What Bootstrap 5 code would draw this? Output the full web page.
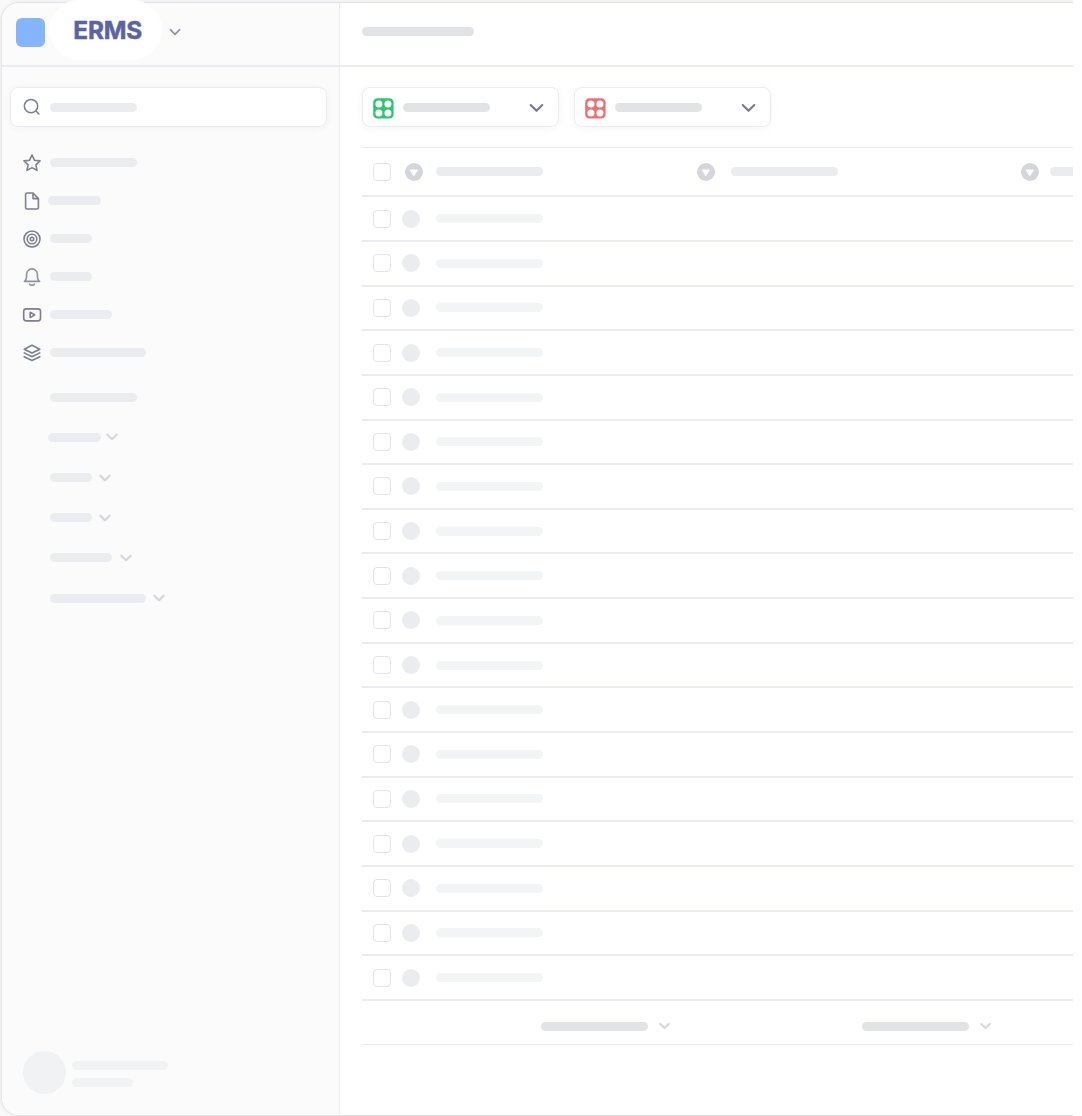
<!DOCTYPE html>
<html lang="en">
<head>
<meta charset="utf-8">
<meta name="viewport" content="width=device-width, initial-scale=1">
<title>ERMS</title>
<link href="https://cdn.jsdelivr.net/npm/bootstrap@5.3.0/dist/css/bootstrap.min.css" rel="stylesheet">
<style>
  body { background: #fff; font-family: Inter, "Liberation Sans", sans-serif; overflow: hidden; }
  svg { display: block; flex: none; fill: none; stroke-linecap: round; stroke-linejoin: round; }
  .stage { width: 1073px; height: 1116px; background: #f9f9fa; padding: 2px 0 0 1px; }
  .frame { width: 1100px; height: 1114px; border: 1px solid #e2e3e7; border-radius: 18px; background: #fff; box-shadow: 0 0 5px rgba(30,34,60,.07); }
  .side { width: 338px; background: #fbfbfb; border-right: 1px solid #ebecef; }
  .topbar { height: 64px; border-bottom: 2px solid #ebecf0; flex: none; }
  .side .topbar { padding-left: 14px; }
  .logo { width: 29px; height: 29px; border-radius: 6px; background: #84b5fe; margin-top: -4px; }
  .brand { left: 49px; top: 0; width: 113px; height: 60px; border-radius: 30px; background: #fff; color: #5b63a5; font-weight: 700; font-size: 24.4px; line-height: 60px; padding-left: 24.3px; -webkit-text-stroke: .5px #5b63a5; letter-spacing: -.2px; }
  .brand-caret { margin: -4px 0 0 124px; }
  .pill { display: block; flex: none; height: 9px; border-radius: 5px; background: #ebecf0; }
  .pill-dark { background: #e2e3e7; }
  .pill-soft { background: #f3f4f6; }
  .w-xl { width: 96px; } .w-lg { width: 87px; } .w-md { width: 62.5px; } .w-sm { width: 53.5px; } .w-xs { width: 42px; } .w-col { width: 107px; }
  .box { background: #fff; border: 1px solid #ebecef; border-radius: 8px; height: 40px; box-shadow: 0 1px 9px rgba(30,34,60,.045); }
  .search { margin: 20px 12px 0 8px; padding-left: 12px; }
  .search .pill { margin: 0 0 0 9px; }
  .side-nav { margin-top: 16.9px; padding-left: 20px; }
  .side-nav > div { height: 37.95px; }
  .side-nav svg { stroke: #7b7f93; stroke-width: 1.6; width: 20px; height: 20px; }
  .side-nav .pill { margin-left: 7.7px; }
  .side-nav .shift { margin-left: 5.7px; }
  .sub-nav { margin-top: 5.6px; padding-left: 47.7px; }
  .sub-nav > div { height: 40.2px; gap: 7.6px; }
  .sub-nav .shift { margin-left: -2px; gap: 5.1px; }
  .pale { stroke: #d5d7de; stroke-width: 2.3; }
  .user { padding: 0 0 21.5px 21px; gap: 6.5px; }
  .avatar { width: 42.5px; height: 42.5px; background: #f1f2f4; }
  .user .pill { background: #f1f2f4; }
  .main { min-width: 0; }
  .main .topbar { padding: 0 0 6px 22px; }
  .filters { padding: 20px 0 0 22px; gap: 15.5px; }
  .filter { width: 196.7px; padding: 1px 14px 0 10.3px; }
  .filter > svg:first-child { margin-top: 1px; }
  .filter .pill { margin: 0 auto 1px 8.6px; }
  .grid-list { margin: 20px 0 0 22px; border-top: 1px solid #ebecef; }
  .line { height: 44.65px; border-bottom: 2px solid #ebecf0; padding-left: 11.3px; }
  .line-head { height: 49.3px; }
  .tick { width: 18px; height: 18px; border: 1px solid #e2e3e8; border-radius: 4px; background: #fff; flex: none; }
  .dot { width: 18px; height: 18px; background: #ebecf0; margin: 0 15.7px 0 11.2px; flex: none; }
  .line-head .first { margin: 0 13.4px 0 13.5px; }
  .line-head .second { margin: 0 15.7px 0 154px; }
  .line-head .third { margin: 0 11px 0 183px; }
  .line-foot { height: 44.3px; padding: 8px 0 0 179px; border-bottom: 1px solid #ebecef; }
  .line-foot svg { margin: 0 192.3px 0 11px; }
</style>
</head>
<body>
<svg width="0" height="0" class="position-absolute">
  <symbol id="sort" viewBox="0 0 18 18"><circle cx="9" cy="9" r="9" fill="#d3d6dd"/><path d="M5.6 7h6.8L9 12.4z" fill="#fff" stroke="#fff" stroke-width="1"/></symbol>
  <symbol id="tiles" viewBox="0 0 21 21"><rect x=".2" y=".2" width="20.4" height="20.4" rx="4.2" fill="currentColor"/><g fill="#fff"><circle cx="5.9" cy="5.9" r="3.5"/><circle cx="14.9" cy="5.9" r="3.5"/><circle cx="5.9" cy="14.9" r="3.5"/><circle cx="14.9" cy="14.9" r="3.5"/></g></symbol>
  <symbol id="chev" viewBox="0 0 12 8"><path d="M1.4 1.7 6 6.3l4.6-4.6"/></symbol>
</svg>

<div class="stage overflow-hidden position-relative">
  <div class="frame d-flex overflow-hidden">
    <aside class="side d-flex flex-column flex-shrink-0">
      <div class="topbar d-flex align-items-center">
        <span class="logo"></span>
        <svg class="brand-caret" width="12" height="8" stroke="#8f93a3" stroke-width="1.7"><use href="#chev"/></svg>
      </div>
      <div class="box search d-flex align-items-center">
        <svg width="18" height="18" stroke="#7b7f93" stroke-width="1.5"><circle cx="8" cy="8.1" r="6.7"/><path d="m13 13 3 3"/></svg>
        <span class="pill w-lg"></span>
      </div>
      <nav class="side-nav">
        <div class="d-flex align-items-center"><svg><path d="m10 2 2.4 5.2 5.6.7-4.1 3.9 1.1 5.6-5-2.8-5 2.8 1.1-5.6L2 7.9l5.6-.7z"/></svg><span class="pill w-lg"></span></div>
        <div class="d-flex align-items-center"><svg><path d="M11 2H5.2a1.6 1.6 0 0 0-1.6 1.6v12.8A1.6 1.6 0 0 0 5.2 18h9.6a1.6 1.6 0 0 0 1.6-1.6V7.6zV7.6h5.4"/></svg><span class="pill w-sm shift"></span></div>
        <div class="d-flex align-items-center"><svg><circle cx="10" cy="10" r="8"/><circle cx="10" cy="10" r="4.8"/><circle cx="10" cy="10" r="1.7"/></svg><span class="pill w-xs"></span></div>
        <div class="d-flex align-items-center"><svg stroke-opacity=".85"><path d="M2.4 14.4h15.2c-1.5-1-2.2-2.6-2.2-5V7.3a5.4 5.4 0 0 0-10.8 0v2.1c0 2.4-.7 4-2.2 5zM7.6 17.2c1.2 1.5 3.6 1.5 4.8 0"/></svg><span class="pill w-xs"></span></div>
        <div class="d-flex align-items-center"><svg><rect x="1.7" y="3.9" width="16.8" height="12" rx="2.6"/><path d="M8.2 7.3v5.2l4.6-2.6z"/></svg><span class="pill w-md"></span></div>
        <div class="d-flex align-items-center"><svg><path d="m10 2.3 7.8 3.9L10 10 2.2 6.2zM2.2 9.9l7.8 3.8 7.8-3.8M2.2 13.7l7.8 3.8 7.8-3.8"/></svg><span class="pill w-xl"></span></div>
      </nav>
      <nav class="sub-nav">
        <div class="d-flex align-items-center"><span class="pill w-lg"></span></div>
        <div class="d-flex align-items-center shift"><span class="pill w-sm"></span><svg class="pale" width="12" height="8"><use href="#chev"/></svg></div>
        <div class="d-flex align-items-center"><span class="pill w-xs"></span><svg class="pale" width="12" height="8"><use href="#chev"/></svg></div>
        <div class="d-flex align-items-center"><span class="pill w-xs"></span><svg class="pale" width="12" height="8"><use href="#chev"/></svg></div>
        <div class="d-flex align-items-center"><span class="pill w-md"></span><svg class="pale" width="12" height="8"><use href="#chev"/></svg></div>
        <div class="d-flex align-items-center"><span class="pill w-xl"></span><svg class="pale" width="12" height="8"><use href="#chev"/></svg></div>
      </nav>
      <div class="user d-flex align-items-center mt-auto">
        <span class="avatar rounded-circle"></span>
        <div class="d-flex flex-column gap-2 pt-1"><span class="pill w-xl"></span><span class="pill" style="width:60.5px"></span></div>
      </div>
    </aside>

    <main class="main flex-grow-1">
      <div class="topbar d-flex align-items-center"><span class="pill pill-dark" style="width:112px"></span></div>
      <div class="filters d-flex">
        <div class="box filter d-flex align-items-center">
          <svg width="21" height="21" color="#2cc672"><use href="#tiles"/></svg><span class="pill pill-dark w-lg"></span>
          <svg width="15" height="10" viewBox="0 0 15 10" stroke="#757a8e" stroke-width="2.1"><path d="m1.7 2 5.8 5.8L13.3 2"/></svg>
        </div>
        <div class="box filter d-flex align-items-center">
          <svg width="21" height="21" color="#ef7070"><use href="#tiles"/></svg><span class="pill pill-dark w-lg"></span>
          <svg width="15" height="10" viewBox="0 0 15 10" stroke="#757a8e" stroke-width="2.1"><path d="m1.7 2 5.8 5.8L13.3 2"/></svg>
        </div>
      </div>
      <section class="grid-list">
        <div class="line line-head d-flex align-items-center">
          <span class="tick"></span>
          <svg class="first" width="18" height="18"><use href="#sort"/></svg><span class="pill w-col"></span>
          <svg class="second" width="18" height="18"><use href="#sort"/></svg><span class="pill w-col"></span>
          <svg class="third" width="18" height="18"><use href="#sort"/></svg><span class="pill w-col"></span>
        </div>
        <div id="lines"></div>
        <div class="line-foot d-flex align-items-center">
          <span class="pill pill-dark w-col"></span><svg class="pale" width="11" height="8" viewBox="0 0 12 8"><use href="#chev" width="12" height="8"/></svg>
          <span class="pill pill-dark w-col"></span><svg class="pale" width="11" height="8" viewBox="0 0 12 8"><use href="#chev" width="12" height="8"/></svg>
        </div>
      </section>
    </main>
  </div>
  <div class="brand position-absolute">ERMS</div>
</div>

<template id="line-tpl"><div class="line d-flex align-items-center"><span class="tick"></span><span class="dot rounded-circle"></span><span class="pill pill-soft w-col"></span></div></template>
<script src="https://cdn.jsdelivr.net/npm/bootstrap@5.3.0/dist/js/bootstrap.bundle.min.js"></script>
<script>
  const tpl = document.getElementById('line-tpl'), list = document.getElementById('lines');
  for (let i = 0; i < 18; i++) list.append(tpl.content.cloneNode(true));
</script>
</body>
</html>
